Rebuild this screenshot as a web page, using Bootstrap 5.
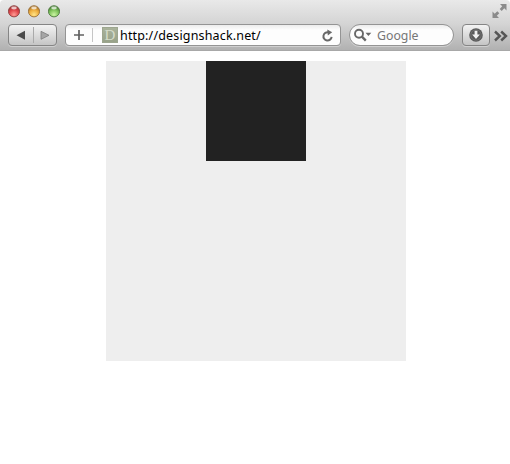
<!DOCTYPE html>
<html lang="en">
<head>
<meta charset="utf-8">
<meta name="viewport" content="width=device-width, initial-scale=1">
<title>designshack.net</title>
<link href="https://cdn.jsdelivr.net/npm/bootstrap@5.3.0/dist/css/bootstrap.min.css" rel="stylesheet">
<style>
body { font-family: "Noto Sans", "Open Sans", sans-serif; font-size: 13px; line-height: 1; }
svg { display: block; flex: none; }
.chrome { height: 51px; background: linear-gradient(#e9e9e9, #d4d4d4 48%, #b1b1b1); border-bottom: 1px solid #a8a8a8; border-top-left-radius: 4px; border-top-right-radius: 4px; }
.titlebar { height: 24px; padding-left: 8px; padding-right: 3px; }
.lights { gap: 8px; padding-top: 5px; }
.toolbar { height: 22px; gap: 8px; padding-left: 8px; }
.tool { height: 22px; border: 1px solid #858585; border-radius: 4px; background: linear-gradient(#f3f3f3, #c5c5c5); box-shadow: 0 1px 0 #d0d0d0; }
.history { width: 49px; }
.history > span { width: 24px; }
.history > span + span { border-left: 1px solid #aaa; height: 16px; width: 23px; }
.address { width: 276px; height: 22px; border: 1px solid #949494; border-radius: 4px; background: linear-gradient(#ececec, #fdfdfd 5px); box-shadow: 0 1px 0 #d0d0d0; padding: 0 7px 0 8px; }
.divider { width: 1px; height: 14px; background: #c5c5c5; margin: 0 9px 0 8px; }
.favicon { width: 16px; height: 16px; background: linear-gradient(#a9b29a, #98a289); color: #d5dbc9; border: 1px solid #9da68f; font: 15px/14px "Liberation Serif", serif; }
.url { color: #000; margin-left: 2px; padding-top: 1px; font-size: 12.5px; line-height: 18px; letter-spacing: .16px; white-space: nowrap; }
.search { width: 105px; height: 22px; border: 1px solid #949494; background: linear-gradient(#ececec, #fdfdfd 5px); box-shadow: 0 1px 0 #d0d0d0; padding-left: 4px; color: #777; font-size: 12.3px; line-height: 18px; }
.search span { margin-left: 5px; padding-top: 1px; }
.download { width: 28px; }
.more { margin-left: -4px; margin-top: 2px; }
.page { padding: 10px 0 0 2px; }
.outer { width: 300px; height: 300px; background: #eee; }
.inner { width: 100px; height: 100px; background: #222; }
</style>
<script src="https://cdn.jsdelivr.net/npm/bootstrap@5.3.0/dist/js/bootstrap.bundle.min.js"></script>
</head>
<body class="bg-white overflow-hidden">
<header class="chrome">
  <div class="titlebar d-flex justify-content-between align-items-start">
    <div class="lights d-flex">
      <svg width="12" height="13" viewBox="0 0 12 13"><defs>
        <radialGradient id="red" cx=".5" cy=".8" r=".7"><stop offset="0" stop-color="#ff9c94"/><stop offset=".6" stop-color="#e0464a"/><stop offset="1" stop-color="#a9393b"/></radialGradient>
        <radialGradient id="amber" cx=".5" cy=".8" r=".7"><stop offset="0" stop-color="#ffe487"/><stop offset=".6" stop-color="#eeae3d"/><stop offset="1" stop-color="#b27a2e"/></radialGradient>
        <radialGradient id="green" cx=".5" cy=".8" r=".7"><stop offset="0" stop-color="#cbf5a3"/><stop offset=".6" stop-color="#80c45c"/><stop offset="1" stop-color="#4f873b"/></radialGradient></defs>
        <circle cx="6" cy="6.300" r="5.600" fill="url(#red)" stroke="#8d4342" stroke-width=".9"/><ellipse cx="6" cy="3" rx="2.800" ry="1.400" fill="#fff" opacity=".7"/></svg>
      <svg width="12" height="13" viewBox="0 0 12 13"><circle cx="6" cy="6.300" r="5.600" fill="url(#amber)" stroke="#98703a" stroke-width=".9"/><ellipse cx="6" cy="3" rx="2.800" ry="1.400" fill="#fff" opacity=".7"/></svg>
      <svg width="12" height="13" viewBox="0 0 12 13"><circle cx="6" cy="6.300" r="5.600" fill="url(#green)" stroke="#4f7a42" stroke-width=".9"/><ellipse cx="6" cy="3" rx="2.800" ry="1.400" fill="#fff" opacity=".7"/></svg>
    </div>
    <svg class="mt-1" width="15" height="15" viewBox="0 0 15 15" fill="#8b8b8b"><path d="M8 0h6.500v6.500l-2.200-2.200-2.600 2.600-2-2 2.500-2.600zM.5 7.500V14H7l-2.200-2.200 2.500-2.500-2-2-2.600 2.500z"/></svg>
  </div>
  <div class="toolbar d-flex align-items-center">
    <div class="tool history d-flex align-items-center">
      <span class="d-flex align-items-center justify-content-center"><svg width="10" height="10" viewBox="0 0 10 10"><path d="M.5 5.300 9 .8v9z" fill="#4a4a4a"/></svg></span>
      <span class="d-flex align-items-center justify-content-center"><svg width="10" height="10" viewBox="0 0 10 10"><path d="M9 5.300 1 1.300v8z" fill="#a5a5a5" stroke="#7c7c7c" stroke-width=".8"/></svg></span>
    </div>
    <div class="address d-flex align-items-center">
      <svg width="10" height="10" viewBox="0 0 10 10"><path d="M5 0v10M0 5h10" stroke="#606060" stroke-width="1.700"/></svg>
      <span class="divider"></span>
      <span class="favicon text-center">D</span>
      <span class="url">http://designshack.net/</span>
      <svg class="ms-auto" width="11" height="13" viewBox="0 0 11 13"><path d="M9.600 7.800A4.100 4.100 0 1 1 6.500 3.400" fill="none" stroke="#686868" stroke-width="2"/><path d="M5.300.4 10.200 3.200 5.800 6.600z" fill="#686868"/></svg>
    </div>
    <div class="search rounded-pill d-flex align-items-center">
      <svg width="18" height="14" viewBox="0 0 18 14"><circle cx="5" cy="5.800" r="4" fill="none" stroke="#686868" stroke-width="1.900"/><path d="m7.900 8.700 3.900 3.900" stroke="#686868" stroke-width="2.400"/><path d="M11.500 4.700h5.800l-2.900 3.400z" fill="#686868"/></svg>
      <span>Google</span>
    </div>
    <div class="tool download d-flex align-items-center justify-content-center">
      <svg width="14" height="14" viewBox="0 0 14 14"><circle cx="7" cy="7" r="6.800" fill="#5a5a5a"/><circle cx="7" cy="7" r="5.200" fill="none" stroke="#7d7d7d" stroke-width=".6"/><path d="M5.600 2.800h2.800v3.700h2.500L7 11 3.100 6.500h2.500z" fill="#f1f1f1"/></svg>
    </div>
    <svg class="more" width="14" height="12" viewBox="0 0 14 12" fill="none" stroke="#555" stroke-width="2.400"><path d="m1 1.500 4.800 4.500L1 10.500M7.200 1.500 12 6l-4.800 4.500"/></svg>
  </div>
</header>
<main class="page d-flex justify-content-center">
  <div class="outer"><div class="inner mx-auto"></div></div>
</main>
</body>
</html>
